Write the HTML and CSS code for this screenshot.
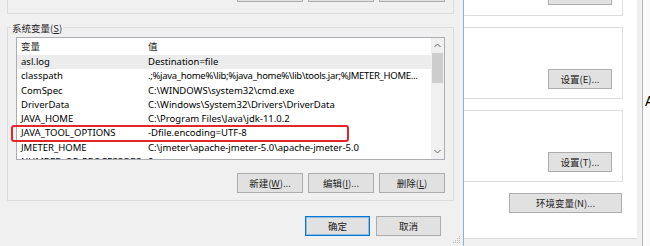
FILE: index.html
```html
<!DOCTYPE html>
<html lang="zh-CN">
  <head>
    <meta charset="UTF-8" />
    <title>环境变量</title>
    <link rel="stylesheet" href="styles.css">
  </head>
  <body>
    <div class="screen">
      <div class="dialog">
        <!-- user variable group, only its bottom edge shows -->
        <div class="user-group">
          <button></button>
          <button></button>
          <button></button>
        </div>

        <div class="sys-group">
          <div class="legend">系统变量(<u>S</u>)</div>
          <div class="list">
            <div class="list-body">
              <div class="row head"><span>变量</span><span>值</span></div>
              <div class="row sel"><span>asl.log</span><span>Destination=file</span></div>
              <div class="row"><span>classpath</span><span class="tight">.;%java_home%\lib;%java_home%\lib\tools.jar;%JMETER_HOME...</span></div>
              <div class="row"><span>ComSpec</span><span>C:\WINDOWS\system32\cmd.exe</span></div>
              <div class="row"><span>DriverData</span><span>C:\Windows\System32\Drivers\DriverData</span></div>
              <div class="row"><span>JAVA_HOME</span><span>C:\Program Files\Java\jdk-11.0.2</span></div>
              <div class="row"><span>JAVA_TOOL_OPTIONS</span><span>-Dfile.encoding=UTF-8</span></div>
              <div class="row"><span>JMETER_HOME</span><span>C:\jmeter\apache-jmeter-5.0\apache-jmeter-5.0</span></div>
              <div class="row"><span>NUMBER_OF_PROCESSORS</span><span>8</span></div>
            </div>
            <div class="scrollbar">
              <svg class="arrow" width="13" height="15" viewBox="0 0 13 15"><polyline points="3.5,9 6.5,6 9.5,9" fill="none" stroke="#606060" stroke-width="1"/></svg>
              <div class="thumb"></div>
              <div class="track"></div>
              <svg class="arrow" width="13" height="15" viewBox="0 0 13 15"><polyline points="3.5,6 6.5,9 9.5,6" fill="none" stroke="#606060" stroke-width="1"/></svg>
            </div>
          </div>
          <div class="btn-row">
            <button>新建(<u>W</u>)...</button>
            <button>编辑(<u>I</u>)...</button>
            <button>删除(<u>L</u>)</button>
          </div>
        </div>

        <div class="dialog-actions">
          <button class="default">确定</button>
          <button>取消</button>
        </div>

        <!-- red annotation box -->
        <div class="highlight"></div>

        <svg class="grip" width="8" height="8" viewBox="0 0 8 8">
          <rect x="6" y="0" width="1" height="1" fill="#b9b9b9"/>
          <rect x="4" y="2" width="1" height="1" fill="#b9b9b9"/>
          <rect x="6" y="2" width="1" height="1" fill="#b9b9b9"/>
          <rect x="2" y="4" width="1" height="1" fill="#b9b9b9"/>
          <rect x="4" y="4" width="1" height="1" fill="#b9b9b9"/>
          <rect x="6" y="4" width="1" height="1" fill="#b9b9b9"/>
          <rect x="0" y="6" width="1" height="1" fill="#b9b9b9"/>
          <rect x="2" y="6" width="1" height="1" fill="#b9b9b9"/>
          <rect x="4" y="6" width="1" height="1" fill="#b9b9b9"/>
          <rect x="6" y="6" width="1" height="1" fill="#b9b9b9"/>
        </svg>
      </div>

      <div class="edge"></div>

      <div class="props">
        <div class="page">
          <div class="box box-first"><button></button></div>
          <div class="box"><button>设置(E)...</button></div>
          <div class="box"><button>设置(T)...</button></div>
          <div class="env-row"><button>环境变量(N)...</button></div>
        </div>
      </div>

      <div class="frame"></div>
      <div class="outside"><span>A</span></div>
    </div>
  </body>
</html>
```

FILE: styles.css
```css
body {
  margin: 0;
  padding: 0;
  background-color: #f0f0f0;
  font-family: "Noto Sans", "Noto Sans CJK SC", sans-serif;
  font-size: 9.5px;
  color: #000;
}
.screen {
  display: flex;
  width: 650px;
  height: 246px;
  overflow: hidden;
}

button {
  height: 20px;
  padding: 0;
  font-family: "Noto Sans CJK SC", sans-serif;
  font-size: 9.5px;
  color: #222;
  background-color: #e1e1e1;
  border: 1px solid #adadad;
  box-sizing: border-box;
  flex-shrink: 0;
}
button u {
  text-underline-offset: 1px;
}
button.default {
  border-color: #0078d7;
  box-shadow: inset 0 0 0 1px rgba(0, 120, 215, 0.35);
}

/* left dialog */
.dialog {
  position: relative;
  width: 463px;
  flex-shrink: 0;
  display: flex;
  flex-direction: column;
  background-color: #f0f0f0;
}
.user-group {
  height: 14px;
  margin: 0 9px 0 7px;
  padding: 0 8px 11px 0;
  border: 1px solid #dcdcdc;
  border-top: none;
  box-sizing: border-box;
  display: flex;
  justify-content: flex-end;
  align-items: flex-end;
  gap: 5px;
}
.user-group button {
  width: 66px;
}

.sys-group {
  margin: 13px 9px 0 7px;
  padding: 0 8px 7px 8px;
  border: 1px solid #dcdcdc;
  display: flex;
  flex-direction: column;
}
.legend {
  align-self: flex-start;
  margin: -7px 0 0 -5px;
  padding: 0 1px;
  height: 14px;
  line-height: 14px;
  background-color: #f0f0f0;
  font-family: "Noto Sans CJK SC", sans-serif;
  color: #222;
}

.list {
  margin-top: 2px;
  height: 123px;
  border: 1px solid #abadb3;
  background-color: #fff;
  box-sizing: border-box;
  display: flex;
}
.list-body {
  flex: 1;
  overflow: hidden;
}
.row {
  display: grid;
  grid-template-columns: 127px 1fr;
  height: 14.3px;
  line-height: 14.3px;
  white-space: nowrap;
}
.row span {
  padding-left: 4px;
  overflow: hidden;
}
.row span.tight {
  letter-spacing: -0.3px;
}
.row.head {
  height: 17px;
  line-height: 17px;
  font-family: "Noto Sans CJK SC", sans-serif;
  color: #1e1e1e;
}
.row.sel {
  background-color: #ececec;
}

.scrollbar {
  width: 13px;
  background-color: #f0f0f0;
  display: flex;
  flex-direction: column;
}
.arrow {
  display: block;
}
.thumb {
  height: 30px;
  margin: 0 1px;
  background-color: #cdcdcd;
}
.track {
  flex: 1;
}

.btn-row {
  margin-top: 13px;
  display: flex;
  justify-content: flex-end;
  gap: 5px;
}
.btn-row button {
  width: 66px;
}

.dialog-actions {
  margin: 15px 22px 0 0;
  display: flex;
  justify-content: flex-end;
  gap: 6px;
}
.dialog-actions button {
  width: 65px;
}

.highlight {
  position: absolute;
  left: 11px;
  top: 125px;
  width: 338px;
  height: 17px;
  border: 2px solid #e3262b;
  border-radius: 3px;
  box-sizing: border-box;
}
.grip {
  position: absolute;
  right: 2px;
  bottom: 2px;
}

.edge {
  width: 1px;
  flex-shrink: 0;
  background-color: #86b0e8;
}

/* system properties window behind */
.props {
  width: 178px;
  flex-shrink: 0;
  background-color: #f0f0f0;
}
.page {
  width: 173px;
  height: 239px;
  background-color: #fff;
  border-bottom: 1px solid #d9d9d9;
  box-sizing: border-box;
  display: flex;
  flex-direction: column;
}
.box {
  width: 159px;
  height: 72px;
  margin-top: 11px;
  padding: 0 10px 9px 0;
  border: 1px solid #dcdcdc;
  border-left: none;
  box-sizing: border-box;
  display: flex;
  justify-content: flex-end;
  align-items: flex-end;
  flex-shrink: 0;
}
.box-first {
  height: 16px;
  margin-top: 0;
  border-top: none;
  padding-bottom: 10px;
}
.box button {
  width: 64px;
}
.env-row {
  margin: 11px 15px 0 0;
  display: flex;
  justify-content: flex-end;
}
.env-row button {
  width: 113px;
}

.frame {
  width: 1px;
  flex-shrink: 0;
  background-color: #b4b4b4;
}
.outside {
  flex: 1;
  background-color: #fafafa;
  padding: 93px 0 0 2px;
  font-family: "Noto Sans", sans-serif;
  font-size: 14px;
  line-height: 16px;
}
```
